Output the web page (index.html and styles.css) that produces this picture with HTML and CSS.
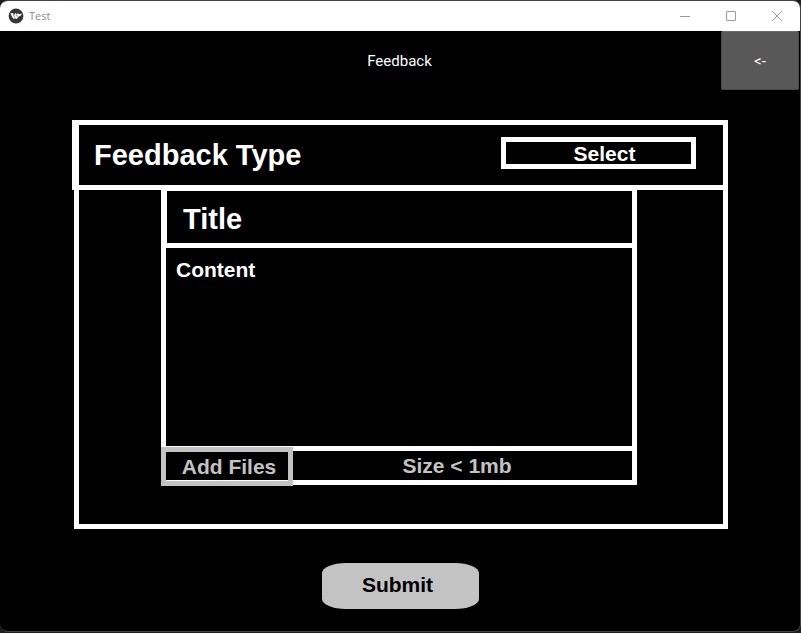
FILE: index.html
```html
<!DOCTYPE html>
<html lang="en">
<head>
<meta charset="utf-8">
<title>Test</title>
<link rel="stylesheet" href="styles.css">
</head>
<body>
<div class="window">
  <header class="titlebar">
    <svg class="app-icon" viewBox="0 0 16 16" aria-hidden="true">
      <circle cx="8" cy="8" r="7.4" fill="#343638"/>
      <path d="M2.4 5.2 5 5l1.3 2L7.4 5.1l1.4 1.2L10 5.2l1 1 3-.8-1.3 2.4-2 .6-2 2.6-1.4-.7L5.8 11 4.2 9.2Z" fill="#fff"/>
      <path d="m5.2 6.2 1.5 3.2M8.4 6.6l.8 2" stroke="#343638" stroke-width=".6"/>
    </svg>
    <span class="window-title">Test</span>
    <div class="window-controls">
      <button class="window-button" type="button" aria-label="Minimize"><svg viewBox="0 0 12 12"><path d="M1 6.5h10"/></svg></button>
      <button class="window-button" type="button" aria-label="Maximize"><svg viewBox="0 0 12 12"><rect x="1.5" y="1.5" width="9" height="9" rx=".5"/></svg></button>
      <button class="window-button" type="button" aria-label="Close"><svg viewBox="0 0 12 12"><path d="m1 1 10 10M11 1 1 11"/></svg></button>
    </div>
  </header>
  <div class="toolbar">
    <h1 class="page-title">Feedback</h1>
    <button class="back" type="button">&lt;-</button>
  </div>
  <form class="form">
    <div class="type-row">
      <label class="type-label" for="type">Feedback Type</label>
      <select class="type-select" id="type"><option>Select</option></select>
    </div>
    <div class="panel">
      <div class="editor">
        <input class="title-input" type="text" placeholder="Title" aria-label="Title">
        <textarea class="content-input" placeholder="Content" aria-label="Content"></textarea>
        <div class="files-row">
          <button class="add-files" type="button">Add Files</button>
          <span class="size-note">Size &lt; 1mb</span>
        </div>
      </div>
    </div>
    <button class="submit" type="button">Submit</button>
  </form>
</div>
</body>
</html>
```
FILE: styles.css
```css
* {
  box-sizing: border-box;
}

body {
  margin: 0;
  background: #1c1c1c;
}

button,
input,
select,
textarea {
  margin: 0;
  padding: 0;
  border: 0;
  border-radius: 0;
  outline: 0;
  background: transparent;
  color: inherit;
  font: inherit;
}

.window {
  min-height: calc(100vh - 1px);
  margin-bottom: 1px;
  overflow: hidden;
  border: solid #444;
  border-width: 1px 1px 1px 0;
  border-radius: 8px;
  background: #000;
  color: #fff;
  font: bold 21px/24px "Liberation Sans", Arial, sans-serif;
}

.titlebar {
  display: flex;
  align-items: center;
  height: 30px;
  padding-left: 8px;
  background: #fff;
  color: #8c8c8c;
}

.app-icon {
  width: 16px;
  height: 16px;
}

.window-title {
  margin-left: 5px;
  font: 11px/16px "Open Sans", sans-serif;
}

.window-controls {
  display: flex;
  margin-left: auto;
}

.window-button {
  display: grid;
  place-items: center;
  width: 46px;
  height: 30px;
}

.window-button svg {
  width: 12px;
  height: 12px;
  fill: none;
  stroke: #999;
}

.toolbar {
  display: grid;
  grid-template-columns: 78px 1fr 78px;
  align-items: center;
  height: 59px;
  padding-right: 1px;
  font: 15px/18px Roboto, sans-serif;
}

.page-title {
  grid-column: 2;
  margin: 0;
  font: inherit;
  text-align: center;
}

.back {
  height: 59px;
  border: 1px solid #4c4c4c;
  border-top-color: #6a6a6a;
  border-radius: 2px;
  background: #585858;
}

.form {
  display: flex;
  flex-direction: column;
  margin: 30px 72px 22px;
}

.type-row {
  display: flex;
  align-items: flex-start;
  justify-content: space-between;
  height: 70px;
  padding: 12px 27px 0 15px;
  border: 5px solid #fff;
  border-left-width: 7px;
}

.type-label {
  font-size: 29px;
  line-height: 36px;
}

.type-select {
  width: 195px;
  height: 32px;
  padding: 0 0 2px 12px;
  border: 5px solid #fff;
  appearance: none;
  text-align: center;
  text-align-last: center;
}

.panel {
  margin-left: 2px;
  padding: 0 86px 39px 82px;
  border: solid #fff;
  border-width: 0 5px 5px;
}

.editor {
  display: flex;
  flex-direction: column;
}

.title-input {
  height: 58px;
  padding: 4px 0 0 16px;
  border: solid #fff;
  border-width: 1px 5px 5px 6px;
  font-size: 29px;
}

.content-input {
  height: 203px;
  padding: 10px;
  border: solid #fff;
  border-width: 0 5px 5px;
  resize: none;
}

::placeholder {
  color: #fff;
  opacity: 1;
}

.files-row {
  position: relative;
  display: flex;
  align-items: center;
  justify-content: center;
  height: 34px;
  padding-left: 116px;
  border: solid #fff;
  border-width: 0 5px 5px;
  color: #c3c3c3;
}

.add-files {
  position: absolute;
  top: -4px;
  bottom: -6px;
  left: -5px;
  width: 132px;
  padding-left: 4px;
  border: 5px solid #c3c3c3;
}

.submit {
  align-self: center;
  width: 157px;
  height: 46px;
  margin-top: 34px;
  padding: 0 5px 2px 0;
  border-radius: 24px / 10px;
  background: #c3c3c3;
  color: #000;
}
```
